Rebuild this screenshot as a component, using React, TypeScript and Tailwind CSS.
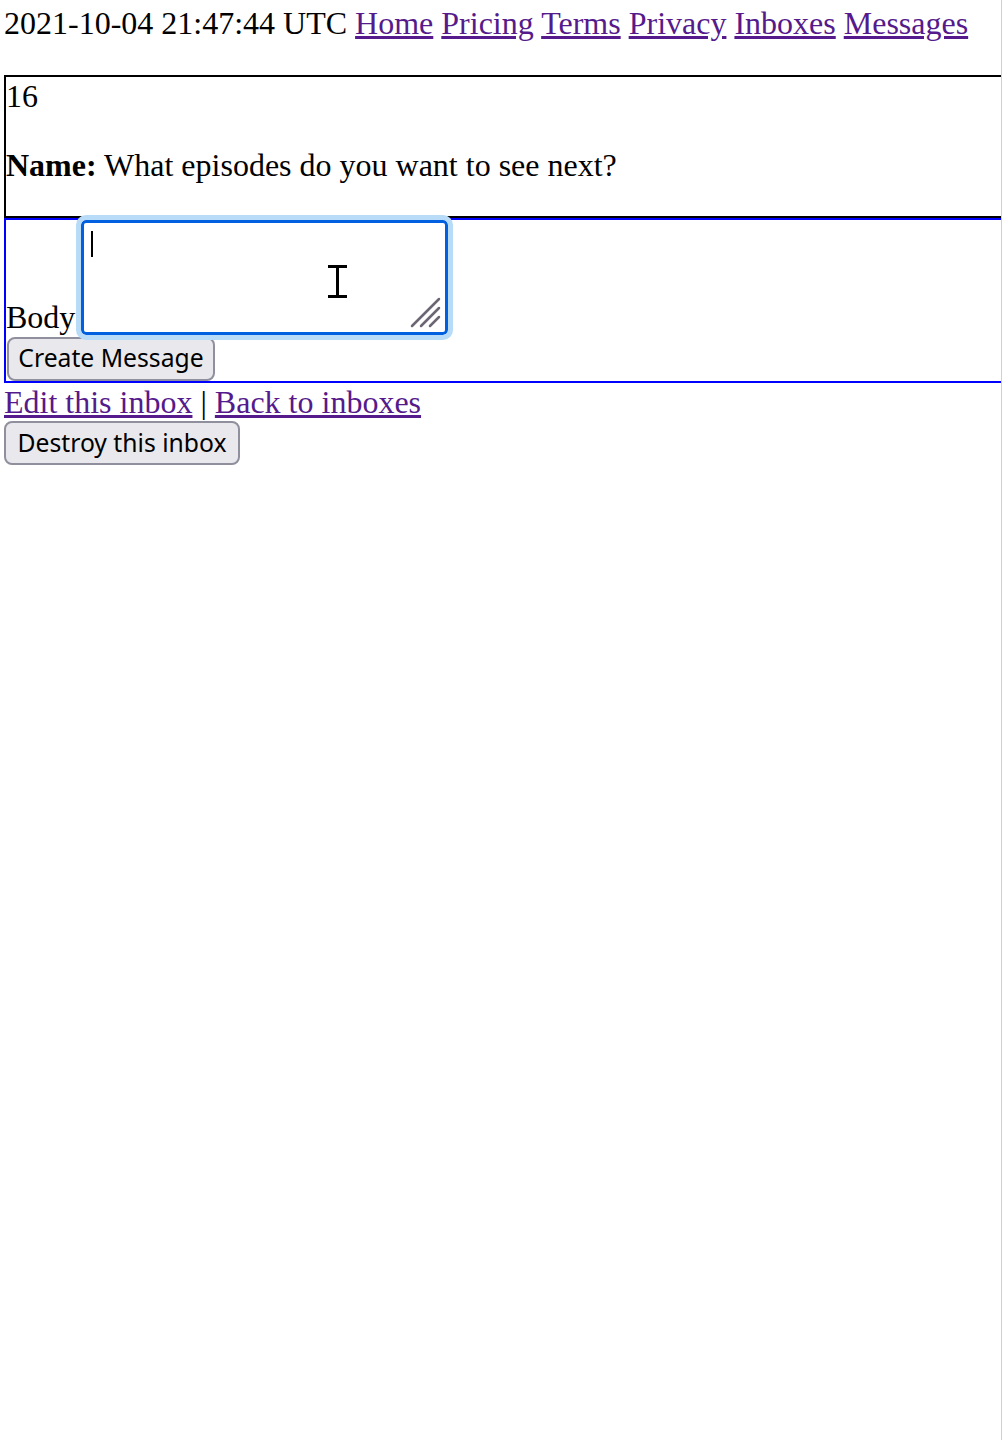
import React from "react";

const linkCls = "text-[#551a8b] underline";

export default function App() {
  return (
    <div className="w-[1002px] min-h-[1440px] overflow-hidden border-r border-[#cfcfcf] bg-white pl-[4px] pt-[5px] font-['Liberation_Serif',serif] text-[32px] leading-[37.5px] text-black">
      <div className="whitespace-nowrap">
        2021-10-04 21:47:44 UTC <a href="#" className={linkCls}>Home</a>{" "}
        <a href="#" className={linkCls}>Pricing</a>{" "}
        <a href="#" className={linkCls}>Terms</a>{" "}
        <a href="#" className={linkCls}>Privacy</a>{" "}
        <a href="#" className={linkCls}>Inboxes</a>{" "}
        <a href="#" className={linkCls}>Messages</a>
      </div>

      <div className="mt-[32px] w-[1100px] border-2 border-black pt-[1px]">
        <div>16</div>
        <p className="mb-[31px] mt-[32px]">
          <b>Name:</b> What episodes do you want to see next?
        </p>
      </div>

      <form className="w-[1100px] border-2 border-[#0000ff]" onSubmit={(e) => e.preventDefault()}>
        <div className="flex items-end">
          <label className="mb-[-2px]">Body</label>
          <div className="relative ml-[6px] h-[115px] w-[367px]">
            <textarea
              className="block h-[115px] w-[367px] resize-none rounded-[5px] border-[3px] border-[#0060df] bg-white outline outline-[5px] outline-[#b8dcf8]"
            />
            <svg
              className="pointer-events-none absolute left-0 top-0"
              width="367"
              height="115"
              viewBox="0 0 367 115"
            >
              <rect x="10" y="11" width="2" height="26" fill="#000" />
              <rect x="247" y="45" width="19" height="3" fill="#000" />
              <rect x="255" y="48" width="3" height="27" fill="#000" />
              <rect x="247" y="75" width="19" height="3" fill="#000" />
              <g stroke="#6b6574" strokeWidth="2.5" strokeLinecap="round">
                <line x1="331" y1="106" x2="358" y2="79" />
                <line x1="340" y1="106" x2="358" y2="88" />
                <line x1="349" y1="106" x2="358" y2="97" />
              </g>
            </svg>
          </div>
        </div>
        <button
          type="submit"
          className="ml-[1px] mt-[2px] block h-[44px] w-[208px] rounded-[8px] border-2 border-[#8f8f9d] bg-[#e9e9ed] text-center font-['Noto_Sans',sans-serif] text-[24.7px] leading-none text-black"
        >
          Create Message
        </button>
      </form>

      <div className="mt-[1px] whitespace-nowrap">
        <a href="#" className={linkCls}>Edit this inbox</a> |{" "}
        <a href="#" className={linkCls}>Back to inboxes</a>
      </div>
      <button
        type="button"
        className="block h-[44px] w-[236px] rounded-[8px] border-2 border-[#8f8f9d] bg-[#e9e9ed] text-center font-['Noto_Sans',sans-serif] text-[24.7px] leading-none text-black"
      >
        Destroy this inbox
      </button>
    </div>
  );
}
